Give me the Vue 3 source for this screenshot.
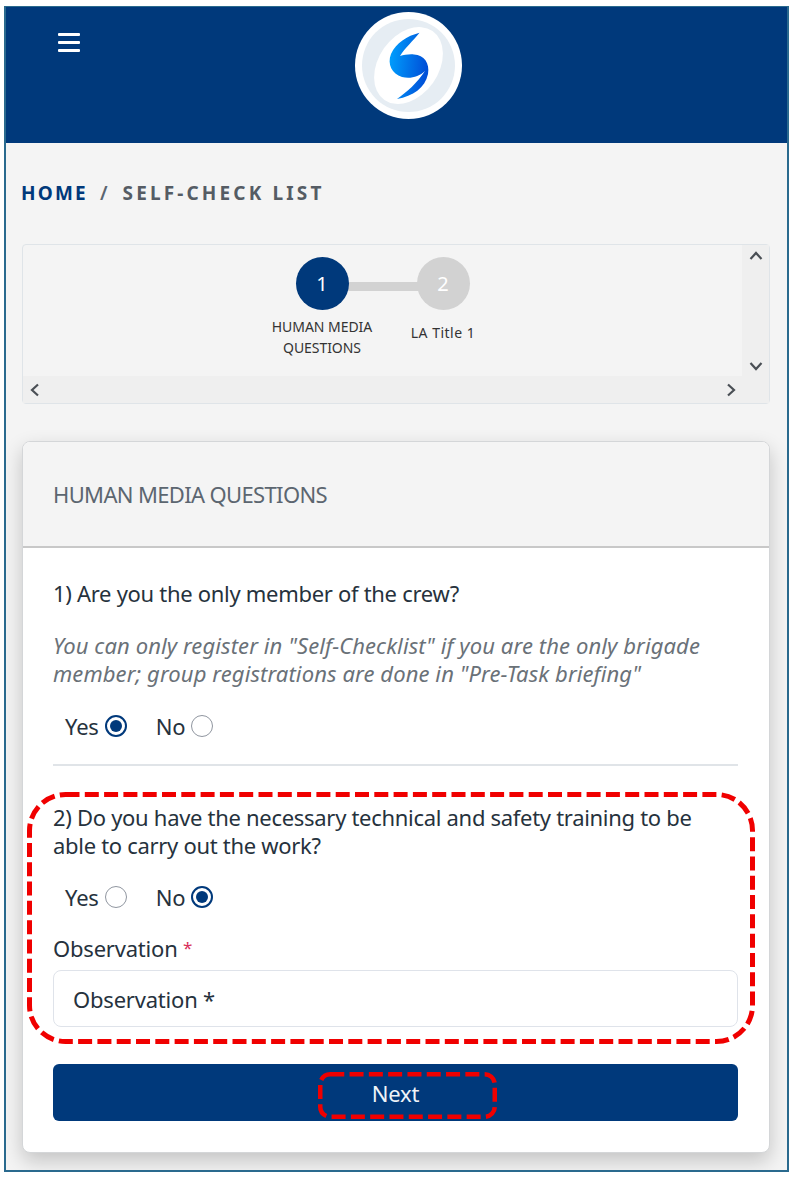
<script setup>
const steps = [
  { n: 1, label: ['HUMAN MEDIA', 'QUESTIONS'], active: true },
  { n: 2, label: ['LA Title 1'], active: false },
]
</script>

<template>
  <div class="frame">
    <header class="top">
      <button class="burger" aria-label="Menu"><span></span><span></span><span></span></button>
      <svg class="logo" viewBox="0 0 107 107" width="107" height="107">
        <defs>
          <linearGradient id="g" x1="0" y1="0" x2="1" y2="0.15">
            <stop offset="0" stop-color="#00a2ff" />
            <stop offset="1" stop-color="#0050d8" />
          </linearGradient>
        </defs>
        <circle cx="53.500" cy="53.500" r="53.500" fill="#fff" />
        <circle cx="53.500" cy="53.500" r="46.500" fill="#e6edf3" />
        <ellipse cx="53.500" cy="53.500" rx="42" ry="30" transform="rotate(-55 53.500 53.500)" fill="#fff" />
        <path fill="url(#g)" d="M64.500 20.800C52 24 41 31 36 42C32 52 37 62 47 65C55 67 64 65 70 59C62 71 52 80 42 87C58 84 70 76 73 62C75 51 69 43 59 42.500C54 42 49 43 45 44C50 36 58 29 64.500 20.800Z" />
      </svg>
    </header>

    <main class="content">
      <nav class="crumbs">
        <span class="home">HOME</span><span class="sep">/</span><span class="cur">SELF-CHECK LIST</span>
      </nav>

      <section class="stepper">
        <div class="view">
          <div class="steps">
            <div class="link"></div>
            <div v-for="s in steps" :key="s.n" class="step" :class="{ on: s.active }">
              <div class="dot">{{ s.n }}</div>
              <div class="lab" :class="{ single: s.label.length === 1 }"><div v-for="l in s.label" :key="l">{{ l }}</div></div>
            </div>
          </div>
        </div>
        <div class="vbar">
          <svg viewBox="0 0 14 10" width="14" height="10"><path d="M1.500 8 7 2l5.500 6" /></svg>
          <svg viewBox="0 0 14 10" width="14" height="10"><path d="M1.500 2 7 8l5.500-6" /></svg>
        </div>
        <div class="hbar">
          <svg viewBox="0 0 10 14" width="10" height="14"><path d="M8 1.500 2 7l6 5.500" /></svg>
          <svg viewBox="0 0 10 14" width="10" height="14"><path d="M2 1.500 8 7l-6 5.500" /></svg>
        </div>
      </section>

      <section class="card">
        <h2 class="card-head">HUMAN MEDIA QUESTIONS</h2>
        <div class="card-body">
          <p class="q">1) Are you the only member of the crew?</p>
          <p class="hint">You can only register in "Self-Checklist" if you are the only brigade member; group registrations are done in "Pre-Task briefing"</p>
          <div class="radios first">
            <label>Yes <i class="radio sel"></i></label>
            <label>No <i class="radio"></i></label>
          </div>
          <hr />
          <div class="mark-wrap">
            <p class="q">2) Do you have the necessary technical and safety training to be able to carry out the work?</p>
            <div class="radios second">
              <label>Yes <i class="radio"></i></label>
              <label>No <i class="radio sel"></i></label>
            </div>
            <div class="obs">Observation <em>*</em></div>
            <div class="input">Observation *</div>
            <svg class="mark big" width="728" height="252" viewBox="0 0 728 252">
              <rect x="2.500" y="2.500" width="723" height="247" rx="36" />
            </svg>
          </div>
          <button class="next">
            <span>Next</span>
            <svg class="mark small" width="179" height="47" viewBox="0 0 179 47">
              <rect x="2.250" y="2.250" width="174.500" height="42.500" rx="10" />
            </svg>
          </button>
        </div>
      </section>
    </main>
  </div>
</template>

<style>
html, body { margin: 0; background: #fff; }
</style>

<style scoped>
* { box-sizing: border-box; }
.frame {
  margin: 6px 0 0 4px;
  width: 785px;
  height: 1166px;
  border: 2px solid #2a6a8e;
  border-top-width: 1px;
  background: #f4f4f4;
  font-family: "Noto Sans", "Open Sans", sans-serif;
  color: #26323d;
  overflow: hidden;
}
.top {
  height: 136px;
  background: #00397b;
  position: relative;
  display: flex;
  justify-content: center;
  padding-top: 5px;
}
.burger {
  position: absolute;
  left: 52px;
  top: 26px;
  width: 22px;
  padding: 0;
  border: 0;
  background: none;
  display: flex;
  flex-direction: column;
  gap: 5px;
}
.burger span { height: 3px; background: #fff; border-radius: 1px; }
.logo { margin-left: 23px; flex-shrink: 0; }
.content { padding: 0 15px 0 16px; }
.crumbs {
  margin-top: 37px;
  height: 26px;
  line-height: 26px;
  font-size: 19px;
  font-weight: 700;
  white-space: nowrap;
}
.home { color: #00397b; letter-spacing: 2.200px; margin-left: -1px; }
.sep { color: #5a6570; margin: 0 15px 0 12px; font-weight: 600; }
.cur { color: #555c64; letter-spacing: 3.150px; }
.stepper {
  margin-top: 38px;
  width: 748px;
  height: 160px;
  border: 1px solid #dfe4e8;
  border-radius: 4px;
  background: #f4f4f4;
  display: grid;
  grid-template-columns: 1fr 27px;
  grid-template-rows: 1fr 27px;
}
.steps {
  position: relative;
  display: flex;
  justify-content: center;
  padding-top: 12px;
  gap: 15px;
}
.step {
  width: 106px;
  display: flex;
  flex-direction: column;
  align-items: center;
  position: relative;
}
.dot {
  width: 53px;
  height: 53px;
  border-radius: 50%;
  background: #d2d2d2;
  color: #fff;
  font-size: 20px;
  display: flex;
  align-items: center;
  justify-content: center;
}
.on .dot { background: #00397b; }
.lab {
  margin-top: 6px;
  font-size: 14px;
  line-height: 21px;
  text-align: center;
  white-space: nowrap;
  color: #333;
  letter-spacing: -0.050px;
}
.lab.single { padding-top: 6px; letter-spacing: 0.500px; }
.link {
  position: absolute;
  top: 37px;
  left: calc(50% - 36px);
  width: 72px;
  height: 9px;
  background: #d2d2d2;
}
.vbar {
  background: #efefef;
  display: flex;
  flex-direction: column;
  justify-content: space-between;
  align-items: center;
  padding: 6px 0 5px;
}
.hbar {
  grid-column: 1 / 3;
  background: #efefef;
  display: flex;
  justify-content: space-between;
  align-items: center;
  padding: 0 33px 0 7px;
}
.vbar svg path, .hbar svg path { fill: none; stroke: #4a4f55; stroke-width: 2.200; }
.card {
  margin-top: 37px;
  width: 748px;
  height: 712px;
  border: 1px solid #d4d6d8;
  border-radius: 8px;
  overflow: hidden;
  box-shadow: 0 8px 20px rgba(0, 0, 0, 0.2);
  background: #fff;
}
.card-head {
  margin: 0;
  height: 106px;
  display: flex;
  align-items: center;
  padding-left: 30px;
  background: #f4f4f4;
  border-bottom: 2px solid #c8c8c8;
  font-size: 22px;
  font-weight: 400;
  color: #5c6670;
  letter-spacing: -0.650px;
}
.card-body { padding: 31px 31px 0 30px; }
.q {
  margin: 0;
  max-width: 660px;
  font-size: 22px;
  line-height: 28px;
  letter-spacing: -0.300px;
}
.hint {
  margin: 24px 0 0;
  max-width: 660px;
  font-size: 22px;
  line-height: 28px;
  font-style: italic;
  color: #6a7178;
  letter-spacing: 0.100px;
}
.radios { display: flex; gap: 29px; padding-left: 12px; font-size: 22px; letter-spacing: -0.200px; }
.radios label { display: flex; align-items: center; gap: 6px; height: 28px; }
.radios.first { margin-top: 25px; }
.radios.second { margin-top: 24px; }
.radio {
  width: 22px;
  height: 22px;
  border-radius: 50%;
  border: 1px solid #9096a0;
  background: #fff;
  position: relative;
  display: block;
}
.radio.sel { border: 2px solid #00397b; }
.radio.sel::after {
  content: "";
  position: absolute;
  inset: 3px;
  border-radius: 50%;
  background: #00397b;
}
hr {
  margin: 24px 0 0;
  border: 0;
  height: 2px;
  background: #e0e4e8;
}
.mark-wrap { position: relative; margin-top: 37px; }
.obs { margin-top: 23px; font-size: 22px; line-height: 28px; letter-spacing: -0.200px; }
.obs em { color: #d8305a; font-style: normal; font-size: 17px; vertical-align: 3px; }
.input {
  margin-top: 8px;
  height: 57px;
  border: 1px solid #dfe3ea;
  border-radius: 8px;
  padding-left: 19px;
  display: flex;
  align-items: center;
  font-size: 22px;
  letter-spacing: -0.200px;
}
.next {
  margin-top: 37px;
  width: 100%;
  height: 57px;
  border: 0;
  border-radius: 6px;
  background: #00397b;
  color: #eef3f8;
  font: inherit;
  font-size: 22px;
  letter-spacing: -0.200px;
  padding: 1px 0 0;
  display: flex;
  align-items: center;
  justify-content: center;
  position: relative;
}
.mark { position: absolute; pointer-events: none; fill: none; stroke: #f00000; stroke-dasharray: 14 5.300; }
.mark.big { left: -26px; top: -11px; stroke-width: 5; }
.mark.small { left: 265px; top: 8px; stroke-width: 4.500; }
</style>
